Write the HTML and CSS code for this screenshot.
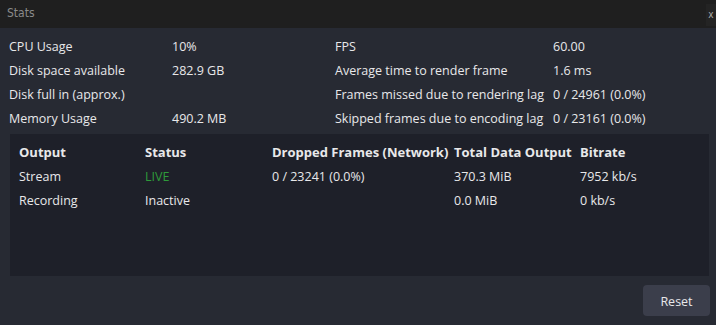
FILE: index.html
```html
<!DOCTYPE html>
<html>
<head>
<meta charset="utf-8">
<link rel="stylesheet" href="styles.css">
</head>
<body>
<div class="window">
  <div class="titlebar">
    <span class="title">Stats</span>
    <span class="close">x</span>
  </div>
  <div class="stats">
    <span>CPU Usage</span><span>10%</span><span>FPS</span><span>60.00</span>
    <span>Disk space available</span><span>282.9 GB</span><span>Average time to render frame</span><span>1.6 ms</span>
    <span>Disk full in (approx.)</span><span></span><span>Frames missed due to rendering lag</span><span>0 / 24961 (0.0%)</span>
    <span>Memory Usage</span><span>490.2 MB</span><span>Skipped frames due to encoding lag</span><span>0 / 23161 (0.0%)</span>
  </div>
  <div class="panel">
    <div class="outputs">
      <span class="head">Output</span><span class="head">Status</span><span class="head">Dropped Frames (Network)</span><span class="head">Total Data Output</span><span class="head">Bitrate</span>
      <span>Stream</span><span class="live">LIVE</span><span>0 / 23241 (0.0%)</span><span>370.3 MiB</span><span>7952 kb/s</span>
      <span>Recording</span><span>Inactive</span><span></span><span>0.0 MiB</span><span>0 kb/s</span>
    </div>
  </div>
  <div class="footer">
    <button class="reset">Reset</button>
  </div>
</div>
</body>
</html>
```
FILE: styles.css
```css
html, body {
  margin: 0;
  padding: 0;
  background: #272a33;
}
.window {
  width: 716px;
  height: 325px;
  display: flex;
  flex-direction: column;
  font-family: "Open Sans", sans-serif;
  font-size: 12.5px;
  color: #e8e8ea;
}
.titlebar {
  height: 28px;
  background: #1f1f1f;
  display: flex;
  align-items: center;
  justify-content: space-between;
  flex-shrink: 0;
}
.title {
  font-family: "DejaVu Sans Condensed", "DejaVu Sans", sans-serif;
  font-stretch: condensed;
  font-size: 12px;
  color: #8a8a8a;
  padding-left: 7px;
  padding-bottom: 2px;
}
.close {
  width: 10px;
  height: 22px;
  background: #242424;
  color: #aaaaaa;
  font-family: "DejaVu Sans Condensed", "DejaVu Sans", sans-serif;
  font-size: 10px;
  line-height: 22px;
  text-align: center;
  margin-top: 2px;
}
.stats {
  display: grid;
  grid-template-columns: 163px 163px 218px 1fr;
  grid-auto-rows: 24px;
  line-height: 24px;
  padding: 7px 0 0 9px;
}
.panel {
  margin: 3px 7px 0 10px;
  height: 142px;
  background: #1e2029;
  padding: 6px 0 0 9px;
  box-sizing: border-box;
}
.outputs {
  display: grid;
  grid-template-columns: 126px 127px 182px 126px 1fr;
  grid-auto-rows: 24px;
  line-height: 24px;
}
.head {
  font-weight: 700;
  font-size: 13px;
}
.outputs span:not(.head) {
  padding-top: 1px;
}
.live {
  color: #2e9a3a;
}
.footer {
  display: flex;
  justify-content: flex-end;
  padding: 9px 6px 0 0;
}
.reset {
  width: 67px;
  height: 31px;
  border: none;
  border-radius: 4px;
  background: #3b3e4b;
  color: #e8e8ea;
  font-family: "Open Sans", sans-serif;
  font-size: 12.5px;
  padding: 2px 0 0 0;
}
```
